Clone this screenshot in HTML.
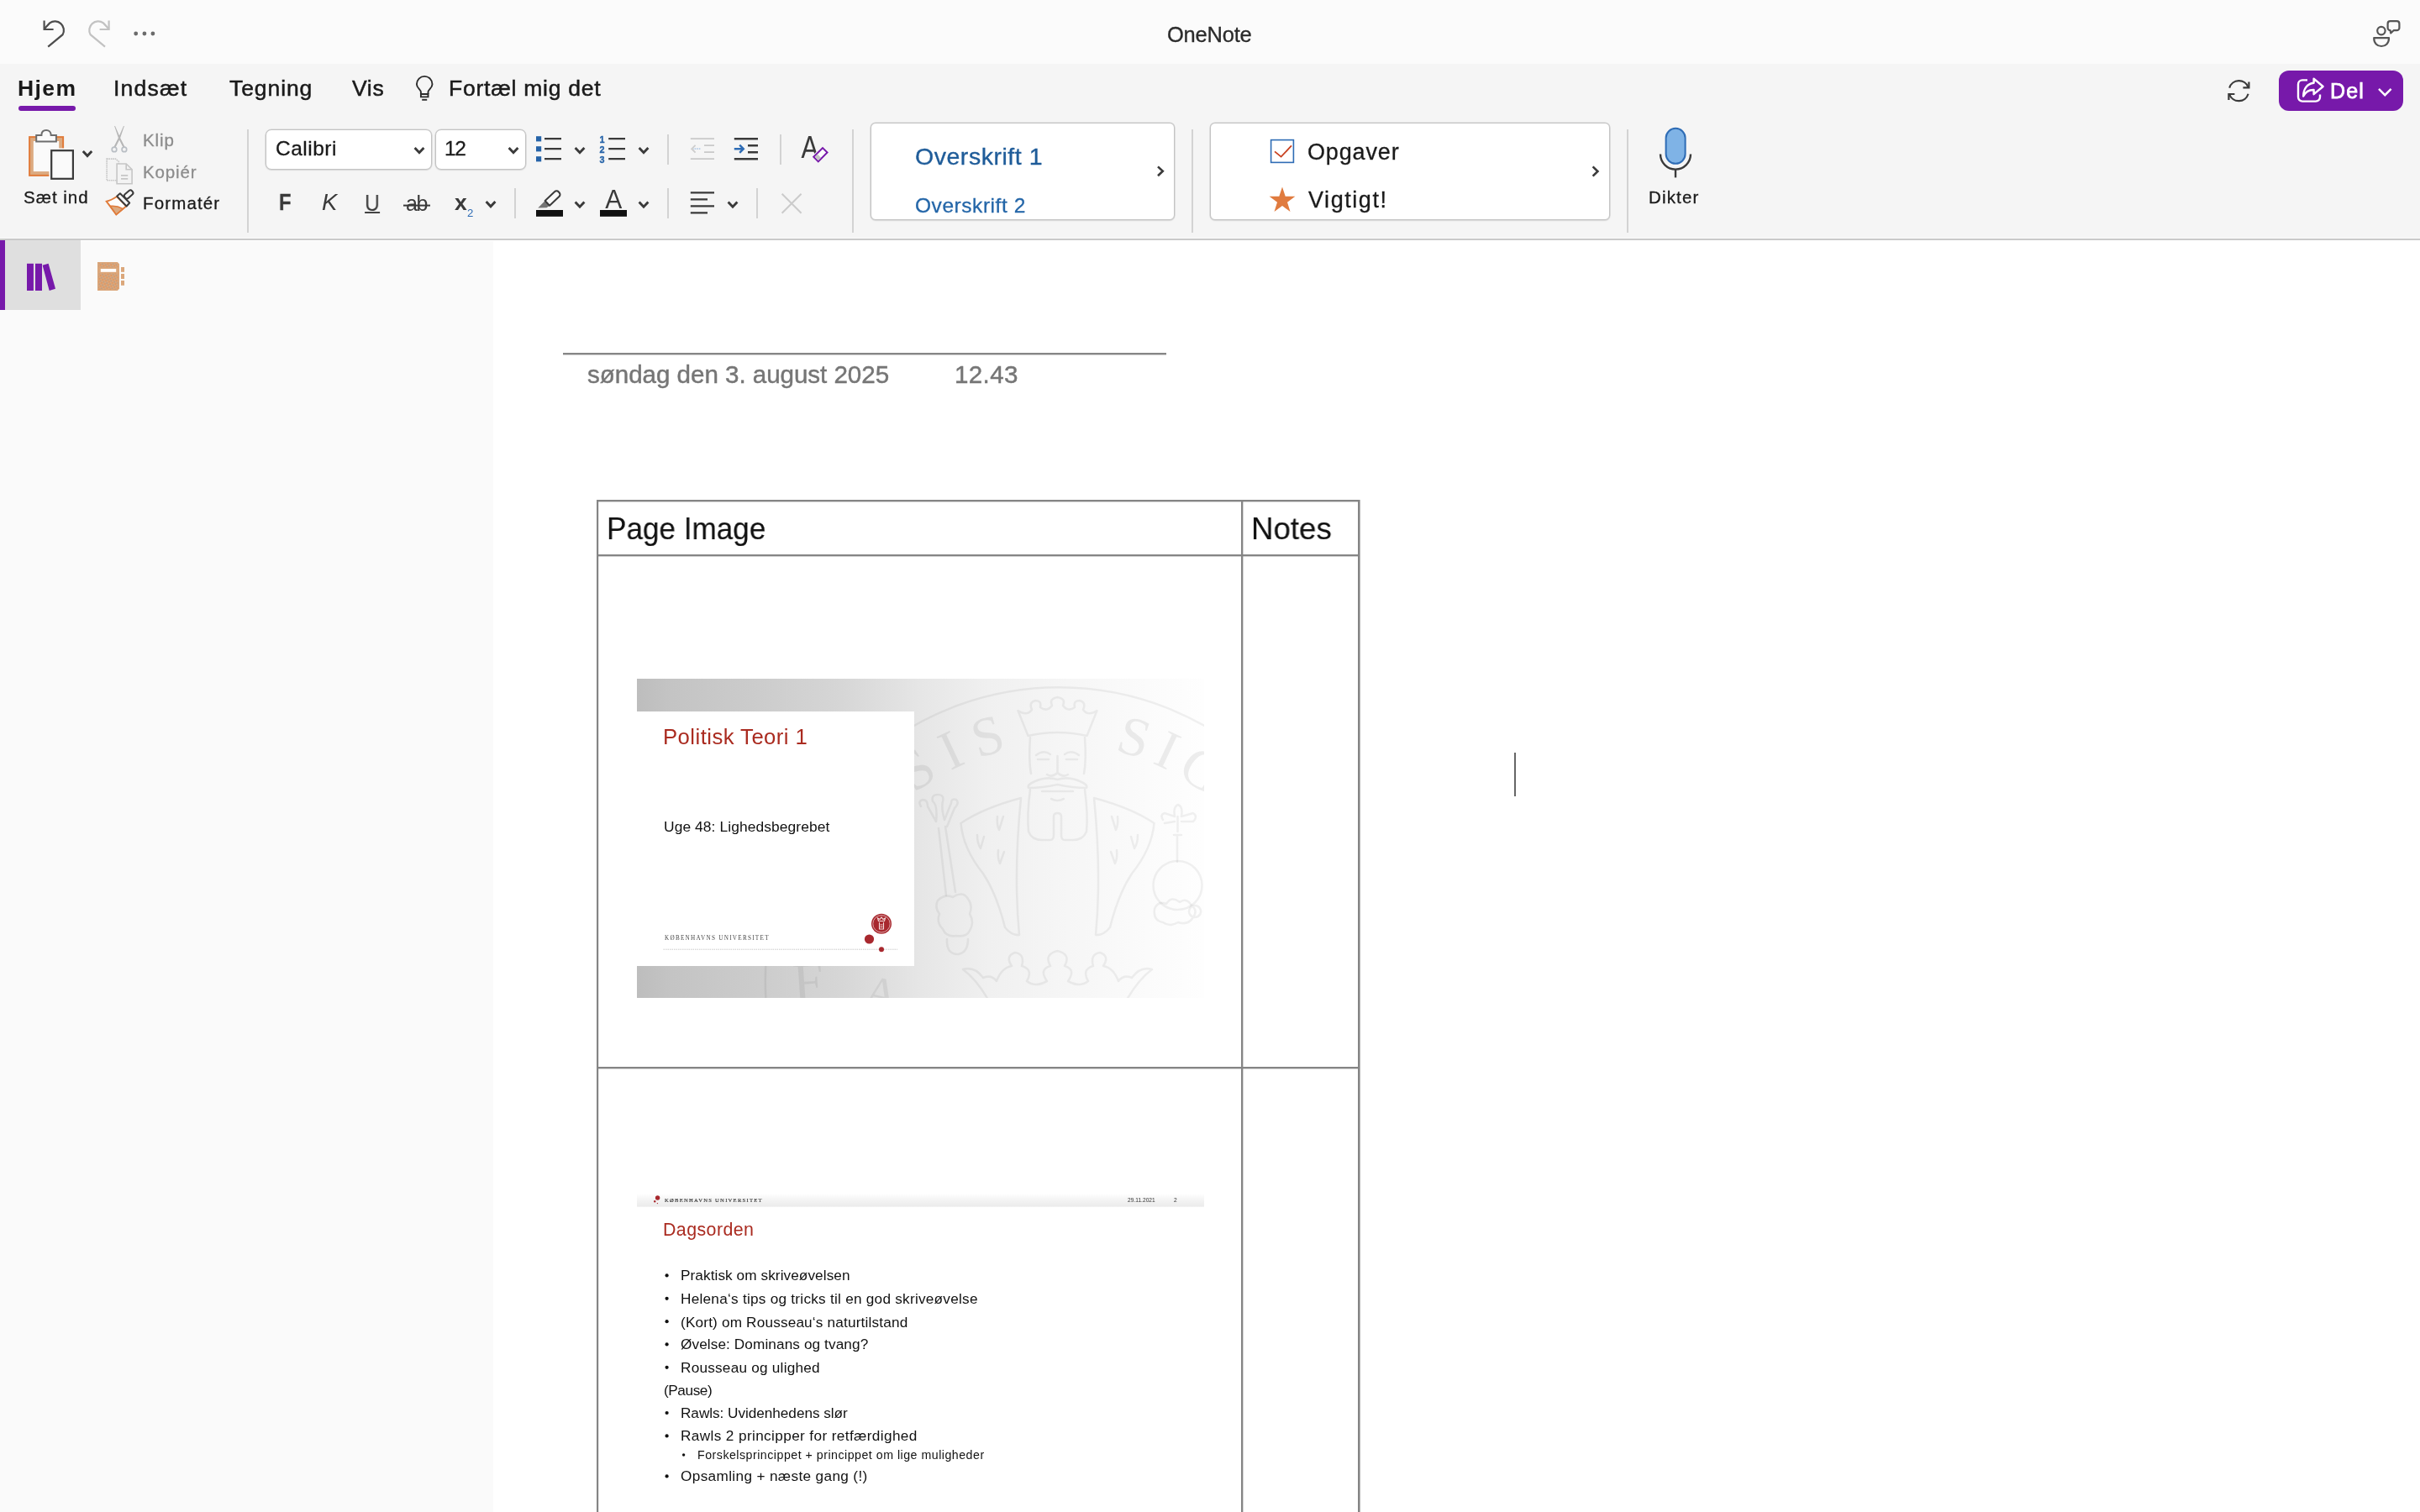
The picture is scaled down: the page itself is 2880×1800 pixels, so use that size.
<!DOCTYPE html>
<html lang="da">
<head>
<meta charset="utf-8">
<title>OneNote</title>
<style>
html,body{margin:0;padding:0;background:#fff;}
body{width:2880px;height:1800px;overflow:hidden;font-family:"Liberation Sans",sans-serif;color:#1a1a1a;}
#app{position:relative;width:2880px;height:1800px;overflow:hidden;background:#fff;}
.a{position:absolute;}
.t{position:absolute;white-space:nowrap;line-height:1;will-change:transform;}
svg{position:absolute;overflow:visible;will-change:transform;}
.sep{position:absolute;width:2px;background:#d3d3d3;}
.box{position:absolute;background:#fff;border:1px solid #c3c3c3;box-sizing:border-box;border-radius:7px;box-shadow:0 0 0 0.6px #d4d4d4,0 1px 1.5px rgba(0,0,0,.10);}
.ser{font-family:"Liberation Serif",serif;}
</style>
</head>
<body>
<div id="app">
<!-- backgrounds -->
<div class="a" style="left:0;top:0;width:2880px;height:76px;background:#fbfbfb;"></div>
<div class="a" style="left:0;top:76px;width:2880px;height:208px;background:#f5f5f5;"></div>
<div class="a" style="left:0;top:283px;width:2880px;height:1px;background:#f9f9f9;"></div>
<div class="a" style="left:0;top:284px;width:2880px;height:2px;background:#c9c9c9;"></div>
<div class="a" style="left:0;top:287px;width:587px;height:1513px;background:#fafafa;"></div>
<div class="a" style="left:0;top:286px;width:96px;height:83px;background:#dfdfdf;"></div>
<div class="a" style="left:0;top:286px;width:6px;height:83px;background:#7719aa;"></div>
<!-- ribbon boxes and separators -->
<div class="box" style="left:316px;top:154px;width:198px;height:48px;"></div>
<div class="box" style="left:518px;top:154px;width:108px;height:48px;"></div>
<div class="box" style="left:1036px;top:146px;width:362px;height:116px;border-radius:6px;"></div>
<div class="box" style="left:1440px;top:146px;width:476px;height:116px;border-radius:6px;"></div>
<div class="sep" style="left:294px;top:154px;height:123px;"></div>
<div class="sep" style="left:1014px;top:154px;height:123px;"></div>
<div class="sep" style="left:1418px;top:154px;height:123px;"></div>
<div class="sep" style="left:1936px;top:154px;height:123px;"></div>
<div class="sep" style="left:794px;top:160px;height:36px;"></div>
<div class="sep" style="left:928px;top:160px;height:36px;"></div>
<div class="sep" style="left:612px;top:224px;height:36px;"></div>
<div class="sep" style="left:794px;top:224px;height:36px;"></div>
<div class="sep" style="left:900px;top:224px;height:36px;"></div>
<!-- Hjem underline + Del button -->
<div class="a" style="left:22px;top:126px;width:68px;height:6px;border-radius:3px;background:#7719aa;"></div>
<div class="a" style="left:2712px;top:84px;width:148px;height:48px;border-radius:12px;background:#7719aa;"></div>
<!-- icon layer 1: title bar + tabs row -->
<svg width="2880" height="290" viewBox="0 0 2880 290" style="left:0;top:0;" fill="none" stroke-linecap="butt" stroke-linejoin="miter">
 <!-- undo -->
 <g stroke="#4d4d4d" stroke-width="2.2">
  <path d="M57.2,55.6 L74.6,41.2 A10.6,10.6 0 0 0 59.2,27.4 L52.6,34.6"/>
  <path d="M52.6,24.4 V35 H63.6"/>
 </g>
 <!-- redo (disabled) -->
 <g stroke="#c2c2c2" stroke-width="2.2">
  <path d="M125,55.6 L107.6,41.2 A10.6,10.6 0 0 1 123,27.4 L129.6,34.6"/>
  <path d="M129.6,24.4 V35 H118.6"/>
 </g>
 <!-- more dots -->
 <g fill="#6b6b6b" stroke="none"><circle cx="161.7" cy="40" r="2.4"/><circle cx="171.9" cy="40" r="2.4"/><circle cx="181.9" cy="40" r="2.4"/></g>
 <!-- lightbulb -->
 <g stroke="#2b2b2b" stroke-width="1.9">
  <path d="M500.9,112 V109.6 C500.9,106.4 495.9,104.8 495.9,100.2 A9.3,9.3 0 0 1 514.5,100.2 C514.5,104.8 509.5,106.4 509.5,109.6 V112"/>
  <path d="M500.9,112 H509.5 V115.4 H500.9 Z"/>
  <path d="M502.2,118.8 H508.2"/>
 </g>
 <!-- people / chat -->
 <g stroke="#555" stroke-width="2.2" stroke-linejoin="round">
  <circle cx="2833.9" cy="36.6" r="4.7"/>
  <path d="M2825.2,45.2 H2843 C2843,51.4 2839.2,55 2834.1,55 C2829,55 2825.2,51.4 2825.2,45.2 Z"/>
  <path d="M2844.6,25.2 H2852.4 A3,3 0 0 1 2855.4,28.2 V33.2 A3,3 0 0 1 2852.4,36.2 H2848.6 L2845.2,39.4 L2844.6,36.2 A3,3 0 0 1 2841.6,33.2 V28.2 A3,3 0 0 1 2844.6,25.2 Z"/>
 </g>
 <!-- sync -->
 <g stroke="#3a3a3a" stroke-width="2.2">
  <path d="M2653.2,104.6 A11.8,11.8 0 0 1 2675.6,104"/>
  <path d="M2669.4,104.4 H2676.4 V97.4"/>
  <path d="M2675.6,111.8 A11.8,11.8 0 0 1 2653.2,112.4"/>
  <path d="M2659.4,112 H2652.4 V119"/>
 </g>
 <!-- share icon on Del -->
 <g stroke="#fff" stroke-width="2.4" stroke-linejoin="round">
  <path d="M2746,95.4 H2740 A5,5 0 0 0 2735,100.4 V115.6 A5,5 0 0 0 2740,120.6 H2756 A5,5 0 0 0 2761,115.6 V112.4"/>
  <path d="M2753.6,93.6 L2764.6,103 L2753.6,112.2 V107 C2747.6,106.8 2743.6,109.6 2741.2,114.6 C2741.2,106 2745.6,99.6 2753.6,98.8 Z"/>
  <path d="M2831,105.8 L2838.3,113.2 L2845.6,105.8" stroke-linejoin="miter"/>
 </g>
</svg>
<!-- icon layer 2: ribbon commands -->
<svg width="2880" height="290" viewBox="0 0 2880 290" style="left:0;top:0;" fill="none">
 <!-- clipboard / paste -->
 <rect x="35.1" y="163.1" width="40" height="45.8" fill="#dcaa80" stroke="#e07b3a" stroke-width="2"/>
 <rect x="39.8" y="168" width="30.4" height="36.1" fill="#fafafa"/>
 <path d="M43.2,168.6 V161.1 H49.4 C49.4,157 52,155.1 55,155.1 C58,155.1 60.7,157 60.7,161.1 H66.9 V168.6 Z" fill="#fafafa" stroke="#6d6d6d" stroke-width="2"/>
 <rect x="58.4" y="176.4" width="31.4" height="39.4" fill="#f5f5f5"/>
 <rect x="61.2" y="179.2" width="25.7" height="33.6" fill="#fafafa" stroke="#3a3a3a" stroke-width="2.2"/>
 <!-- scissors (disabled) -->
 <g fill="#b6b6b6" stroke="none">
  <path d="M136.1,150 L137,150 L143.3,164.6 L148.6,175 L146.6,175.8 L141,164.4 Z"/>
  <path d="M147.900,150 L147,150 L140.700,164.600 L135.400,175 L137.400,175.800 L143,164.400 Z"/>
 </g>
 <g fill="none" stroke="#b9bec4" stroke-width="1.700"><circle cx="136" cy="177.900" r="2.800"/><circle cx="147.900" cy="177.900" r="2.800"/></g>
 <!-- copy (disabled) -->
 <g stroke="#c6c6c6" stroke-width="1.600" fill="#f3f3f3">
  <path d="M127.100,189.100 H137.600 L141.400,192.400 V214.800 H127.100 Z" stroke-dasharray="1.600 0.800"/>
  <path d="M139.100,195 H150.200 L157.100,201.800 V218.800 H139.100 Z"/>
  <path d="M150.200,195 V201.800 H157.100" fill="none"/>
  <path d="M144,208.900 H152.200 M144,212.900 H152.200" fill="none"/>
 </g>
 <!-- format painter -->
 <path d="M139,234 Q132,238.600 126.800,239.800 L138.300,255.400 L150.200,245.400 Z" fill="#fdfdfd" stroke="#e07b3a" stroke-width="2" stroke-linejoin="miter"/>
 <path d="M131.400,245.400 Q139,244.600 146.400,248.600 L138.300,255.400 Z" fill="#dcaa80" stroke="#e07b3a" stroke-width="1.600"/>
 <g transform="translate(148.800 235.200) rotate(-41)"><rect x="0" y="-3" width="11.400" height="6" rx="2.400" fill="#f5f5f5" stroke="#3a3a3a" stroke-width="2"/></g>
 <path d="M139.200,233.600 L142.900,230.300 L154.200,241.500 L150.600,245.500 Z" fill="#f5f5f5" stroke="#3a3a3a" stroke-width="2" stroke-linejoin="round"/>
 <!-- chevrons (down) -->
 <g stroke="#3a3a3a" stroke-width="2.9" stroke-linejoin="miter">
  <path d="M98.8,180 L104,185.6 L109.2,180"/>
  <path d="M493.6,175.9 L499,181.7 L504.4,175.9"/>
  <path d="M605.6,175.9 L611,181.7 L616.4,175.9"/>
  <path d="M684.6,175.9 L690,181.7 L695.4,175.9"/>
  <path d="M760.6,175.9 L766,181.7 L771.4,175.9"/>
  <path d="M578.6,240 L584,245.8 L589.4,240"/>
  <path d="M684.6,240.4 L690,246.2 L695.4,240.4"/>
  <path d="M760.6,240.4 L766,246.2 L771.4,240.4"/>
  <path d="M866.6,240.4 L872,246.2 L877.4,240.4"/>
  <!-- chevrons (right) -->
  <path d="M1378,198.4 L1383.8,203.8 L1378,209.2" stroke-width="2.6"/>
  <path d="M1895.6,198.4 L1901.4,204 L1895.6,209.6" stroke-width="2.6"/>
 </g>
 <!-- bullet list -->
 <g fill="#2563a8"><rect x="638" y="162.2" width="6.2" height="6.2"/><rect x="638" y="174.2" width="6.2" height="6.2"/><rect x="638" y="186.2" width="6.2" height="6.2"/></g>
 <g stroke="#3a3a3a" stroke-width="2.2"><path d="M648,165.2 H668 M648,177.2 H668 M648,189.2 H668"/>
 <!-- numbered list lines -->
  <path d="M724.2,165.2 H744 M724.2,177.2 H744 M724.2,189.2 H744"/></g>
 <g font-family="Liberation Sans, sans-serif" font-weight="bold" font-size="10.8" fill="#2563a8" stroke="#2563a8" stroke-width="0.35"><text x="713.6" y="169.6">1</text><text x="713.6" y="181.6">2</text><text x="713.6" y="193.8">3</text></g>
 <!-- outdent (disabled) -->
 <g stroke="#c9c9c9" stroke-width="1.8"><path d="M821.8,165.100 H850 M838,173.100 H850 M838,181.100 H850 M821.8,189.100 H850"/><path d="M833.4,177.2 H825" stroke="#b4cbe6" stroke-dasharray="1.6 1"/><path d="M827.6,172.8 L823.2,177.2 L827.6,181.6" stroke="#cdcdcd"/></g>
 <!-- indent -->
 <g stroke="#3a3a3a" stroke-width="2.4"><path d="M873.8,165.2 H902 M890,173.2 H902 M890,181.2 H902 M873.8,189.2 H902"/><path d="M873.8,177.2 H884.6 M880.2,172.6 L884.8,177.2 L880.2,181.8" stroke="#2e6cb5"/></g>
 <!-- clear formatting: A + eraser -->
 <text x="953.4" y="188" font-family="Liberation Sans, sans-serif" font-size="36.4" fill="#3a3a3a" textLength="20.4" lengthAdjust="spacingAndGlyphs">A</text>
 <g transform="translate(976.4 184.2) rotate(-45)"><rect x="-9.6" y="-5.9" width="19.2" height="11.8" fill="#f5f5f5"/><rect x="-7.6" y="-3.9" width="15.200" height="7.800" fill="#fdfdfd" stroke="#7719aa" stroke-width="2"/><rect x="-6.600" y="-2.900" width="4.600" height="5.800" fill="#c4c4c4"/></g>
 <!-- underline bar, strike bar -->
 <rect x="434.1" y="252.1" width="18" height="1.9" fill="#3a3a3a"/>
 <rect x="480" y="243.6" width="32" height="2" fill="#3a3a3a"/>
 <!-- highlighter -->
 <g transform="translate(651.35 241.85) rotate(-43.2)"><path d="M0,-3.95 L0,3.95 L-4.3,3.4 L-11.9,-3.5 Z" fill="#757575"/><path d="M0,-3.95 H15.6 A3.4,3.4 0 0 1 19,-0.55 V0.55 A3.4,3.4 0 0 1 15.6,3.95 H0 Z" fill="#fafafa" stroke="#3a3a3a" stroke-width="2" stroke-linejoin="round"/></g>
 <rect x="638" y="250" width="32" height="7.8" fill="#111"/>
 <!-- font colour -->
 <text x="720.2" y="248.3" font-family="Liberation Sans, sans-serif" font-size="30.7" fill="#3a3a3a" textLength="20" lengthAdjust="spacingAndGlyphs">A</text>
 <rect x="714" y="250" width="32" height="7.8" fill="#111"/>
 <!-- align -->
 <g stroke="#3a3a3a" stroke-width="2.4"><path d="M821.8,229.4 H850 M821.8,237.4 H842 M821.8,245.4 H850 M821.8,253.4 H842"/></g>
 <!-- delete X (disabled) -->
 <g stroke="#cbcbcb" stroke-width="2"><path d="M930.6,230.8 L953.6,253.8 M953.6,230.8 L930.6,253.8"/></g>
 <!-- checkbox -->
 <rect x="1512.6" y="166.6" width="26.8" height="26.8" fill="#fff" stroke="#2e6cb5" stroke-width="1.6"/>
 <path d="M1517,180.4 L1524.6,186.6 L1537,173.4" stroke="#c8401f" stroke-width="1.8"/>
 <!-- star -->
 <path d="M1526,222.6 L1529.7,233.7 L1541.4,233.8 L1532,240.8 L1535.5,251.9 L1526,245.1 L1516.5,251.9 L1520,240.8 L1510.6,233.8 L1522.3,233.7 Z" fill="#e07b3f"/>
 <!-- microphone -->
 <rect x="1982.6" y="152.8" width="23" height="42" rx="11.5" fill="#7fb3e6" stroke="#2e6cb5" stroke-width="2"/>
 <path d="M1976,183.6 A18,18 0 0 0 2012,183.6" stroke="#3a3a3a" stroke-width="2.4"/>
 <path d="M1994,201.6 V211.4" stroke="#3a3a3a" stroke-width="2.4"/>
</svg>
<!-- sidebar icons -->
<svg width="200" height="100" viewBox="0 280 200 100" style="left:0;top:280px;">
 <defs><pattern id="spk" width="4" height="4" patternUnits="userSpaceOnUse" patternTransform="rotate(18)"><rect width="4" height="4" fill="#dba77b"/><rect x="0.6" y="0.6" width="1" height="1" fill="#7d8791"/><rect x="2.6" y="2.4" width="1.1" height="1.1" fill="#e8772e"/></pattern></defs>
 <g fill="#7719aa"><rect x="32" y="313.8" width="7.9" height="32.2"/><rect x="42" y="313.8" width="8" height="32.2"/><path d="M50.6,315.8 L57.6,313.8 L66,343.7 L58.7,346 Z"/></g>
 <path d="M116.1,312 H139.6 L142,314.4 V343.6 L139.6,346 H116.1 Z" fill="url(#spk)"/>
 <path d="M116.1,312 H139.6 L142,314.4 V343.6 L139.6,346 H116.1 Z M117.4,313.3 V344.7 H139.2 L140.7,343.2 V314.8 L139.2,313.3 Z" fill="#dba77b" fill-rule="evenodd"/>
 <rect x="116.6" y="318.4" width="24.8" height="7" fill="#dba77b"/>
 <rect x="119.8" y="320" width="18.4" height="3.8" fill="#fff"/>
 <g fill="#dba77b"><rect x="144" y="318" width="4" height="5.8"/><rect x="144" y="326" width="4" height="6"/><rect x="144" y="334" width="4" height="5.8"/></g>
</svg>
<!-- page title rule + caret -->
<div class="a" style="left:670px;top:420px;width:718px;height:2px;background:#868686;box-shadow:0 1px 0 rgba(134,134,134,.4);"></div>
<div class="a" style="left:1802px;top:896px;width:2px;height:52px;background:#666;"></div>
<!-- table grid -->
<div class="a" style="left:710px;top:595px;width:908px;height:2px;background:#858585;box-shadow:0 1px 0 rgba(133,133,133,.35);"></div>
<div class="a" style="left:710px;top:660px;width:908px;height:2px;background:#858585;box-shadow:0 1px 0 rgba(133,133,133,.35);"></div>
<div class="a" style="left:710px;top:1270px;width:908px;height:2px;background:#858585;box-shadow:0 1px 0 rgba(133,133,133,.35);"></div>
<div class="a" style="left:710px;top:595px;width:2px;height:1205px;background:#858585;box-shadow:1px 0 0 rgba(133,133,133,.2);"></div>
<div class="a" style="left:1477px;top:595px;width:2px;height:1205px;background:#858585;box-shadow:1px 0 0 rgba(133,133,133,.35);"></div>
<div class="a" style="left:1616px;top:595px;width:2px;height:1205px;background:#858585;box-shadow:1px 0 0 rgba(133,133,133,.6);"></div>
<!-- slide 1 -->
<div class="a" style="left:758px;top:808px;width:675px;height:380px;background:linear-gradient(90deg,#bdbdbd 0%,#c4c4c4 6%,#cbcbcb 20%,#d6d6d6 36%,#e6e6e6 50%,#f0f0f0 62%,#f6f6f6 76%,#fbfbfb 90%,#fefefe 100%);"></div>
<svg width="675" height="380" viewBox="758 808 675 380" style="left:758px;top:808px;overflow:hidden;" fill="none" stroke="#000" stroke-opacity="0.055" stroke-width="2.6" stroke-linecap="round" stroke-linejoin="round">
 <defs>
  <path id="arcL" d="M978.5,1168 A282,282 0 0 1 1260.5,886"/>
  <path id="arcR" d="M1260.5,886 A282,282 0 0 1 1542.5,1168"/>
  <path id="arcB" d="M880,1330 A330,330 0 0 1 1120,1010"/>
 </defs>
 <!-- outer ring of the seal -->
 <circle cx="1260.5" cy="1168" r="349.7"/>
 <!-- legend letters along the ring -->
 <g stroke="none" fill="#000" fill-opacity="0.065" font-family="Liberation Serif, serif" font-size="66">
  <text><textPath href="#arcL" startOffset="257" textLength="124">S I S</textPath></text>
  <text><textPath href="#arcR" startOffset="66" textLength="126">S I G</textPath></text>
 </g>
 <g stroke="none" fill="#000" fill-opacity="0.06" font-family="Liberation Serif, serif" font-size="66">
  <text transform="translate(945 1192) rotate(-4)">F</text>
  <text transform="translate(1026 1196) rotate(12)" font-size="54">A</text>
 </g>
 <!-- crown -->
 <path d="M1223.5,876 L1211.5,846 Q1222,853 1228,845 Q1224,836 1232,834 Q1240,834 1238,842 Q1246,848 1252,840 Q1248,832 1258.5,830 Q1269,832 1265,840 Q1271,848 1279,842 Q1277,834 1285,834 Q1293,836 1289,845 Q1295,853 1305.5,846 L1293.5,876 Q1258.5,868 1223.5,876 Z"/>
 <!-- face -->
 <path d="M1226,878 Q1224,905 1227,921 M1291,878 Q1293,905 1290,921"/>
 <path d="M1233,899 Q1242,892 1250,898 M1235,904 H1248 M1267,898 Q1275,892 1284,899 M1269,904 H1282"/>
 <path d="M1258.5,900 V920 Q1252,926 1246,922 M1258.5,920 Q1265,926 1271,922"/>
 <!-- moustache and beard -->
 <path d="M1258.5,928 Q1246,924 1232,930 Q1222,934 1224,938 Q1240,938 1258.5,934 Q1277,938 1293,938 Q1295,934 1285,930 Q1271,924 1258.5,928 Z"/>
 <path d="M1240,942 H1277 M1251,951 Q1258.5,955 1266,951"/>
 <path d="M1226,940 Q1222,970 1224,990 Q1228,1000 1240,1000 H1250 Q1254,1000 1254,994 V972 Q1254,968 1258.5,968 Q1263,968 1263,972 V994 Q1263,1000 1267,1000 H1277 Q1289,1000 1293,990 Q1295,970 1291,940"/>
 <!-- cape left / right -->
 <path d="M1215,950 Q1170,962 1143.5,980 Q1146,1010 1170,1040 Q1186,1064 1196,1104 Q1204,1114 1213,1113 Q1206,1040 1215,950 Z"/>
 <path d="M1302,950 Q1347,962 1373.500,980 Q1371,1010 1347,1040 Q1331,1064 1321,1104 Q1313,1114 1304,1113 Q1311,1040 1302,950 Z"/>
 <path d="M1187,972 Q1186,982 1189,988 L1194,972 M1163,994 Q1163,1004 1167,1010 L1171,996 M1188,1012 Q1187,1022 1190,1028 L1195,1014 M1330,972 Q1331,982 1328,988 L1323,972 M1354,994 Q1354,1004 1350,1010 L1346,996 M1329,1012 Q1330,1022 1327,1028 L1322,1014"/>
 <!-- sceptre -->
 <path d="M1117,986 L1126,1066 M1125,984 L1137,1062 M1096,960 Q1092,954 1098,952 Q1104,952 1104,960 L1114,978 Q1116,958 1110,954 Q1108,946 1116,946 Q1124,946 1122,954 Q1120,962 1124,976 L1132,956 Q1132,950 1138,952 Q1142,956 1136,962 L1127,984"/>
 <path d="M1116,1072 Q1124,1064 1134,1068 Q1146,1060 1152,1070 Q1158,1078 1154,1088 Q1160,1098 1154,1108 Q1150,1116 1138,1114 Q1126,1116 1122,1106 Q1114,1098 1118,1088 Q1112,1080 1116,1072 Z M1127,1118 Q1126,1136 1140,1136 Q1152,1134 1152,1118"/>
 <!-- orb -->
 <circle cx="1401.5" cy="1054" r="29"/>
 <path d="M1401,1026 V994 M1397,994 H1406 M1401.500,990 V972 M1384,976 Q1380,970 1386,968 L1398,972 Q1396,960 1402,958 Q1408,960 1406,972 L1420,968 Q1426,972 1420,978 L1406,978 M1398,978 L1386,980 Z"/>
 <path d="M1374,1082 Q1378,1072 1388,1076 Q1394,1066 1404,1074 Q1412,1068 1418,1078 Q1426,1084 1420,1092 Q1414,1102 1402,1098 Q1392,1104 1384,1098 Q1372,1096 1374,1082 Z M1422,1078 a7,7 0 1 0 0.1,0"/>
 <!-- lower crown / trefoils -->
 <path d="M1146,1154 Q1160,1150 1170,1164 Q1180,1160 1186,1168 Q1192,1152 1204,1150 Q1196,1138 1208,1134 Q1220,1136 1216,1150 Q1230,1154 1222,1168 Q1232,1176 1246,1168 Q1236,1154 1250,1150 Q1242,1136 1258.500,1132 Q1275,1136 1267,1150 Q1281,1154 1271,1168 Q1285,1176 1295,1168 Q1287,1154 1301,1150 Q1297,1136 1309,1134 Q1321,1138 1313,1150 Q1325,1152 1331,1168 Q1337,1160 1347,1164 Q1357,1150 1371,1154 Q1355,1166 1341,1190 M1146,1154 Q1162,1166 1176,1190"/>
</svg>
<!-- white title card -->
<div class="a" style="left:758px;top:847px;width:330px;height:303px;background:#fff;"></div>
<svg width="330" height="303" viewBox="758 847 330 303" style="left:758px;top:847px;">
 <path d="M789.5,1130.200 H1068" stroke="#c9c9c9" stroke-width="1" stroke-dasharray="1.500 1"/>
 <circle cx="1049" cy="1099.800" r="12" fill="#a8282e"/>
 <circle cx="1049" cy="1099.800" r="10.200" fill="none" stroke="#e7c3c4" stroke-width="0.800"/>
 <g stroke="#f3dcdc" stroke-width="1.100" fill="none"><path d="M1045.500,1096.500 L1044.500,1093 L1047,1094.500 L1049,1092 L1051,1094.500 L1053.500,1093 L1052.500,1096.500 Z"/><path d="M1046.500,1098 V1106 H1051.500 V1098 M1047.500,1101 H1050.500 M1047.500,1103.500 H1050.500"/></g>
 <circle cx="1034.500" cy="1118" r="5.600" fill="#a8282e"/>
 <circle cx="1049" cy="1130.200" r="3" fill="#a8282e"/>
</svg>
<!-- slide 2 -->
<div class="a" style="left:758px;top:1421px;width:675px;height:16px;background:linear-gradient(180deg,#ffffff 0%,#f6f6f6 35%,#ececec 92%,#f6f6f6 100%);"></div>
<svg width="675" height="382" viewBox="758 1418 675 382" style="left:758px;top:1418px;">
 <circle cx="782.600" cy="1426" r="2.700" fill="#a8282e"/><circle cx="779.200" cy="1430.200" r="1.200" fill="#a8282e"/><circle cx="782.400" cy="1432.600" r="0.700" fill="#a8282e"/>
 <g fill="#111"><circle cx="793.600" cy="1518.400" r="2.100"/><circle cx="793.600" cy="1545.800" r="2.100"/><circle cx="793.600" cy="1573.200" r="2.100"/><circle cx="793.600" cy="1600.400" r="2.100"/><circle cx="793.600" cy="1627.800" r="2.100"/><circle cx="793.600" cy="1682" r="2.100"/><circle cx="793.600" cy="1709.400" r="2.100"/><circle cx="813.600" cy="1732" r="1.700"/><circle cx="793.600" cy="1757.400" r="2.100"/></g>
</svg>
<!-- text -->
<span class="t" id="ttl" style="left:1389.0px;top:28.8px;font-size:25.5px;color:#2b2b2b;-webkit-text-stroke:0.3px #2b2b2b;letter-spacing:-0.23px;">OneNote</span>
<span class="t" id="tab1" style="left:21.0px;top:91.6px;font-size:26.5px;font-weight:bold;color:#1a1a1a;letter-spacing:1.40px;">Hjem</span>
<span class="t" id="tab2" style="left:135.0px;top:91.6px;font-size:26.5px;color:#1a1a1a;-webkit-text-stroke:0.5px #1a1a1a;letter-spacing:1.20px;">Indsæt</span>
<span class="t" id="tab3" style="left:273.0px;top:91.6px;font-size:26.5px;color:#1a1a1a;-webkit-text-stroke:0.5px #1a1a1a;letter-spacing:0.92px;">Tegning</span>
<span class="t" id="tab4" style="left:419.2px;top:91.6px;font-size:26.5px;color:#1a1a1a;-webkit-text-stroke:0.5px #1a1a1a;letter-spacing:0.65px;">Vis</span>
<span class="t" id="tab5" style="left:533.6px;top:91.6px;font-size:26.5px;color:#1a1a1a;-webkit-text-stroke:0.5px #1a1a1a;letter-spacing:0.76px;">Fortæl mig det</span>
<span class="t" id="saet" style="left:28.0px;top:225.0px;font-size:20.5px;color:#1a1a1a;-webkit-text-stroke:0.3px #1a1a1a;letter-spacing:1.00px;">Sæt ind</span>
<span class="t" id="klip" style="left:170.0px;top:156.6px;font-size:20.5px;color:#8c8c8c;-webkit-text-stroke:0.3px #8c8c8c;letter-spacing:0.93px;">Klip</span>
<span class="t" id="kop" style="left:170.0px;top:194.6px;font-size:20.5px;color:#8c8c8c;-webkit-text-stroke:0.3px #8c8c8c;letter-spacing:0.84px;">Kopiér</span>
<span class="t" id="form" style="left:170.0px;top:232.2px;font-size:20.5px;color:#1a1a1a;-webkit-text-stroke:0.3px #1a1a1a;letter-spacing:1.14px;">Formatér</span>
<span class="t" id="cal" style="left:328.0px;top:165.3px;font-size:24.5px;color:#1a1a1a;-webkit-text-stroke:0.3px #1a1a1a;letter-spacing:0.50px;">Calibri</span>
<span class="t" id="sz" style="left:529.4px;top:165.3px;font-size:24.5px;color:#1a1a1a;-webkit-text-stroke:0.3px #1a1a1a;letter-spacing:-1.50px;">12</span>
<span class="t" id="ov1" style="left:1089.2px;top:171.7px;font-size:28.5px;color:#1f5c99;-webkit-text-stroke:0.35px #1f5c99;letter-spacing:0.53px;">Overskrift 1</span>
<span class="t" id="ov2" style="left:1089.2px;top:233.3px;font-size:24.5px;color:#2466a8;-webkit-text-stroke:0.3px #2466a8;letter-spacing:0.55px;">Overskrift 2</span>
<span class="t" id="opg" style="left:1555.8px;top:167.7px;font-size:27px;color:#1a1a1a;-webkit-text-stroke:0.3px #1a1a1a;letter-spacing:0.85px;">Opgaver</span>
<span class="t" id="vig" style="left:1556.8px;top:224.9px;font-size:27px;color:#1a1a1a;-webkit-text-stroke:0.3px #1a1a1a;letter-spacing:1.56px;">Vigtigt!</span>
<span class="t" id="dik" style="left:1961.8px;top:224.8px;font-size:20.5px;color:#1a1a1a;-webkit-text-stroke:0.3px #1a1a1a;letter-spacing:1.16px;">Dikter</span>
<span class="t" id="del" style="left:2773.4px;top:96.0px;font-size:25px;color:#fff;-webkit-text-stroke:0.75px #fff;letter-spacing:1.20px;">Del</span>
<span class="t" id="bF" style="left:332.4px;top:227.3px;font-size:27.5px;color:#3a3a3a;font-weight:bold;-webkit-text-stroke:0.4px #3a3a3a;transform:scaleX(.86);transform-origin:0 0;">F</span>
<span class="t" id="bK" style="left:382.6px;top:227.3px;font-size:27.5px;color:#3a3a3a;font-style:italic;">K</span>
<span class="t" id="bU" style="left:434.2px;top:227.9px;font-size:27.5px;color:#3a3a3a;transform:scaleX(.9);transform-origin:0 0;">U</span>
<span class="t" id="bab" style="left:483.4px;top:230.4px;font-size:25px;color:#3a3a3a;letter-spacing:-1.50px;">ab</span>
<span class="t" id="bx" style="left:541.4px;top:228.2px;font-size:26.5px;color:#3a3a3a;font-weight:bold;">x</span>
<span class="t" id="b2" style="left:555.6px;top:247.0px;font-size:13.2px;color:#2e6cb5;">2</span>
<span class="t" id="date" style="left:698.8px;top:430.5px;font-size:29.6px;color:#767676;-webkit-text-stroke:0.45px #767676;letter-spacing:-0.05px;">søndag den 3. august 2025</span>
<span class="t" id="time" style="left:1136.4px;top:430.5px;font-size:29.6px;color:#767676;-webkit-text-stroke:0.45px #767676;letter-spacing:0.35px;">12.43</span>
<span class="t" id="pi" style="left:721.8px;top:610.5px;font-size:37px;color:#111;-webkit-text-stroke:0.15px #111;transform:scaleX(0.9487);transform-origin:0 0;">Page Image</span>
<span class="t" id="no" style="left:1488.8px;top:610.5px;font-size:37px;color:#111;-webkit-text-stroke:0.15px #111;transform:scaleX(0.9904);transform-origin:0 0;">Notes</span>
<!-- text -->
<span class="t" id="s1t" style="left:788.6px;top:865.4px;font-size:25.7px;color:#aa2b20;letter-spacing:0.45px;">Politisk Teori 1</span>
<span class="t" id="s1s" style="left:789.6px;top:975.9px;font-size:17.4px;color:#111;letter-spacing:0.09px;">Uge 48: Lighedsbegrebet</span>
<span class="t" id="s1k" style="left:790.8px;top:1114.1px;font-size:7.2px;color:#4a4a4a;font-family:'Liberation Serif',serif;letter-spacing:1.26px;">KØBENHAVNS UNIVERSITET</span>
<span class="t" id="s2k" style="left:791.0px;top:1425.6px;font-size:6.6px;color:#333;-webkit-text-stroke:0.15px #333;font-family:'Liberation Serif',serif;letter-spacing:1.26px;">KØBENHAVNS UNIVERSITET</span>
<span class="t" id="s2d" style="left:1342.0px;top:1426.4px;font-size:6.6px;color:#333;letter-spacing:0.02px;">29.11.2021</span>
<span class="t" id="s2n" style="left:1397.0px;top:1426.4px;font-size:6.6px;color:#333;">2</span>
<span class="t" id="s2t" style="left:788.6px;top:1454.3px;font-size:21.4px;color:#aa2b20;letter-spacing:0.42px;">Dagsorden</span>
<span class="t" id="b1" style="left:809.8px;top:1510.4px;font-size:17.2px;color:#111;letter-spacing:0.08px;">Praktisk om skriveøvelsen</span>
<span class="t" id="b2_" style="left:809.8px;top:1538.0px;font-size:17.2px;color:#111;letter-spacing:0.25px;">Helena‘s tips og tricks til en god skriveøvelse</span>
<span class="t" id="b3" style="left:810.0px;top:1565.6px;font-size:17.2px;color:#111;letter-spacing:0.17px;">(Kort) om Rousseau‘s naturtilstand</span>
<span class="t" id="b4" style="left:809.8px;top:1592.0px;font-size:17.2px;color:#111;letter-spacing:0.10px;">Øvelse: Dominans og tvang?</span>
<span class="t" id="b5" style="left:809.8px;top:1620.0px;font-size:17.2px;color:#111;letter-spacing:0.23px;">Rousseau og ulighed</span>
<span class="t" id="b6" style="left:790.0px;top:1647.4px;font-size:17.2px;color:#111;letter-spacing:-0.42px;">(Pause)</span>
<span class="t" id="b7" style="left:809.8px;top:1674.4px;font-size:17.2px;color:#111;letter-spacing:-0.04px;">Rawls: Uvidenhedens slør</span>
<span class="t" id="b8" style="left:809.8px;top:1701.4px;font-size:17.2px;color:#111;letter-spacing:0.38px;">Rawls 2 principper for retfærdighed</span>
<span class="t" id="b9" style="left:829.8px;top:1725.0px;font-size:14.2px;color:#111;letter-spacing:0.50px;">Forskelsprincippet + princippet om lige muligheder</span>
<span class="t" id="b10" style="left:809.8px;top:1749.4px;font-size:17.2px;color:#111;letter-spacing:0.35px;">Opsamling + næste gang (!)</span>
</div>
</body>
</html>
